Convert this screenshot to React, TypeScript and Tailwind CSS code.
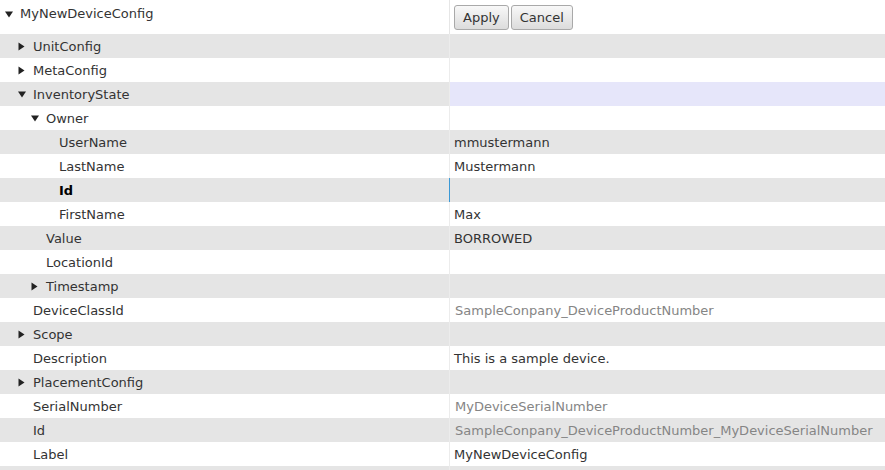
type Row = {
  label: string;
  level: number;
  toggle?: "open" | "closed";
  value?: string;
  muted?: boolean;
  bold?: boolean;
  highlight?: boolean;
  caret?: boolean;
};

const rows: Row[] = [
  { label: "UnitConfig", level: 1, toggle: "closed" },
  { label: "MetaConfig", level: 1, toggle: "closed" },
  { label: "InventoryState", level: 1, toggle: "open", highlight: true },
  { label: "Owner", level: 2, toggle: "open" },
  { label: "UserName", level: 3, value: "mmustermann" },
  { label: "LastName", level: 3, value: "Mustermann" },
  { label: "Id", level: 3, bold: true, caret: true },
  { label: "FirstName", level: 3, value: "Max" },
  { label: "Value", level: 2, value: "BORROWED" },
  { label: "LocationId", level: 2 },
  { label: "Timestamp", level: 2, toggle: "closed" },
  { label: "DeviceClassId", level: 1, value: "SampleConpany_DeviceProductNumber", muted: true },
  { label: "Scope", level: 1, toggle: "closed" },
  { label: "Description", level: 1, value: "This is a sample device." },
  { label: "PlacementConfig", level: 1, toggle: "closed" },
  { label: "SerialNumber", level: 1, value: "MyDeviceSerialNumber", muted: true },
  { label: "Id", level: 1, value: "SampleConpany_DeviceProductNumber_MyDeviceSerialNumber", muted: true },
  { label: "Label", level: 1, value: "MyNewDeviceConfig" },
  { label: "", level: 1 },
];

const indent = ["w-1", "w-[17px]", "w-[30px]", "w-[43px]"];

function Toggle({ kind }: { kind?: "open" | "closed" }) {
  return (
    <span className="w-4 h-6 flex items-center shrink-0">
      {kind === "open" && (
        <svg width="9" height="7" viewBox="0 0 9 7" className="ml-px">
          <path d="M0 0.5 H8 L4 6.5 Z" fill="#222" />
        </svg>
      )}
      {kind === "closed" && (
        <svg width="7" height="9" viewBox="0 0 7 9" className="ml-px">
          <path d="M0.5 0.5 V8.5 L6.5 4.5 Z" fill="#222" />
        </svg>
      )}
    </span>
  );
}

function Btn({ children }: { children: string }) {
  return (
    <button className="h-[25px] px-[8px] border border-[#a9a9a9] rounded-[3px] bg-gradient-to-b from-[#f8f8f8] to-[#dcdcdc] text-[13px] text-[#333] leading-none">
      {children}
    </button>
  );
}

export default function App() {
  return (
    <div className="w-[885px] h-[470px] overflow-hidden bg-white text-[13px] text-[#333] font-['DejaVu_Sans',sans-serif]">
      {/* header */}
      <div className="flex h-[34px]">
        <div className="w-[450px] border-r border-[#e6e6e6] flex items-start pt-[2px]">
          <span className={indent[0]} />
          <Toggle kind="open" />
          <span className="leading-6">MyNewDeviceConfig</span>
        </div>
        <div className="flex-1 flex items-start pt-[5px] pl-1 gap-[2px]">
          <Btn>Apply</Btn>
          <Btn>Cancel</Btn>
        </div>
      </div>

      {rows.map((r, i) => {
        const gray = i % 2 === 0;
        return (
          <div key={i} className={`flex h-6 ${gray ? "bg-[#e5e5e5]" : "bg-white"}`}>
            <div className="w-[450px] border-r border-[#ececec] flex items-center">
              <span className={indent[r.level]} />
              <Toggle kind={r.toggle} />
              <span className={`pt-px ${r.bold ? "font-bold text-black" : ""}`}>{r.label}</span>
            </div>
            <div
              className={`flex-1 flex items-center pl-1 pt-px relative ${r.highlight ? "bg-[#e6e6fa]" : ""} ${
                r.muted ? "text-[#858585] pl-[5px]" : ""
              }`}
            >
              {r.caret && <span className="absolute left-[-1px] top-0 h-6 w-px bg-[#3b99d6]" />}
              {r.value}
            </div>
          </div>
        );
      })}
    </div>
  );
}
